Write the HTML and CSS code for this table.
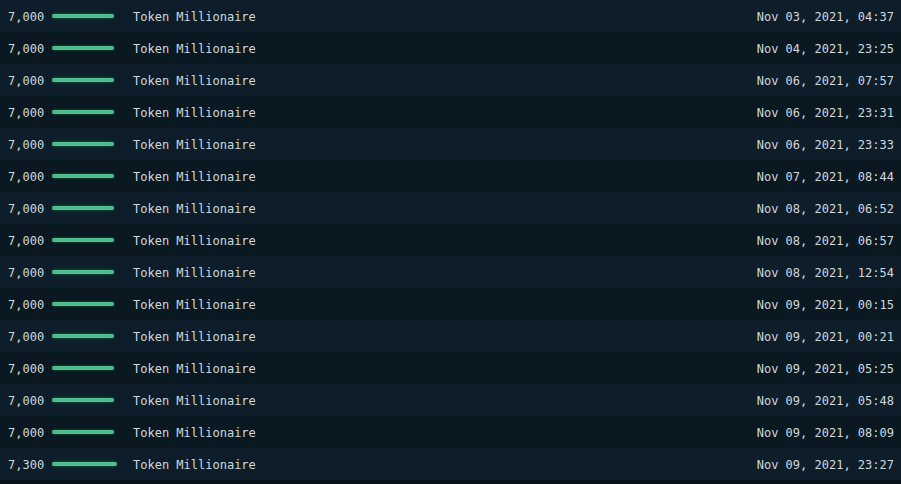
FILE: index.html
```html
<!DOCTYPE html>
<html>
<head>
    <title>Leaderboard</title>
    <meta name="viewport" content="width=device-width, initial-scale=1">
    <link rel="stylesheet" href="styles.css">
</head>
<body>
<div id="list">
    <div class="row"><span class="amount">7,000</span><span class="track"><span class="bar" style="width: 62px"></span></span><span class="title">Token Millionaire</span><span class="date">Nov 03, 2021, 04:37</span></div>
    <div class="row"><span class="amount">7,000</span><span class="track"><span class="bar" style="width: 62px"></span></span><span class="title">Token Millionaire</span><span class="date">Nov 04, 2021, 23:25</span></div>
    <div class="row"><span class="amount">7,000</span><span class="track"><span class="bar" style="width: 62px"></span></span><span class="title">Token Millionaire</span><span class="date">Nov 06, 2021, 07:57</span></div>
    <div class="row"><span class="amount">7,000</span><span class="track"><span class="bar" style="width: 62px"></span></span><span class="title">Token Millionaire</span><span class="date">Nov 06, 2021, 23:31</span></div>
    <div class="row"><span class="amount">7,000</span><span class="track"><span class="bar" style="width: 62px"></span></span><span class="title">Token Millionaire</span><span class="date">Nov 06, 2021, 23:33</span></div>
    <div class="row"><span class="amount">7,000</span><span class="track"><span class="bar" style="width: 62px"></span></span><span class="title">Token Millionaire</span><span class="date">Nov 07, 2021, 08:44</span></div>
    <div class="row"><span class="amount">7,000</span><span class="track"><span class="bar" style="width: 62px"></span></span><span class="title">Token Millionaire</span><span class="date">Nov 08, 2021, 06:52</span></div>
    <div class="row"><span class="amount">7,000</span><span class="track"><span class="bar" style="width: 62px"></span></span><span class="title">Token Millionaire</span><span class="date">Nov 08, 2021, 06:57</span></div>
    <div class="row"><span class="amount">7,000</span><span class="track"><span class="bar" style="width: 62px"></span></span><span class="title">Token Millionaire</span><span class="date">Nov 08, 2021, 12:54</span></div>
    <div class="row"><span class="amount">7,000</span><span class="track"><span class="bar" style="width: 62px"></span></span><span class="title">Token Millionaire</span><span class="date">Nov 09, 2021, 00:15</span></div>
    <div class="row"><span class="amount">7,000</span><span class="track"><span class="bar" style="width: 62px"></span></span><span class="title">Token Millionaire</span><span class="date">Nov 09, 2021, 00:21</span></div>
    <div class="row"><span class="amount">7,000</span><span class="track"><span class="bar" style="width: 62px"></span></span><span class="title">Token Millionaire</span><span class="date">Nov 09, 2021, 05:25</span></div>
    <div class="row"><span class="amount">7,000</span><span class="track"><span class="bar" style="width: 62px"></span></span><span class="title">Token Millionaire</span><span class="date">Nov 09, 2021, 05:48</span></div>
    <div class="row"><span class="amount">7,000</span><span class="track"><span class="bar" style="width: 62px"></span></span><span class="title">Token Millionaire</span><span class="date">Nov 09, 2021, 08:09</span></div>
    <div class="row"><span class="amount">7,300</span><span class="track"><span class="bar" style="width: 65px"></span></span><span class="title">Token Millionaire</span><span class="date">Nov 09, 2021, 23:27</span></div>
</div>
</body>
</html>
```

FILE: styles.css
```css
html, body {
    margin: 0px;
    padding: 0px;
    background-color: #07121a;
}

#list {
    display: flex;
    flex-direction: column;
    font-family: "DejaVu Sans Mono", "Liberation Mono", monospace;
    font-size: 12px;
    color: #d0d8dd;
}

.row {
    height: 32px;
    padding: 0px 7px 0px 8px;
    display: flex;
    align-items: center;
    background-color: #0d1e2a;
}

.row:nth-child(even) {
    background-color: #0a1822;
}

.amount, .title, .date {
    padding-top: 2px;
}

.amount {
    width: 36px;
}

.track {
    width: 73px;
    margin: 0px 8px;
    display: flex;
    align-items: center;
}

.bar {
    height: 4px;
    border-radius: 2px;
    background-color: #4cbf8b;
    box-shadow: 0px 0px 3px rgba(76, 191, 139, 0.45);
}

.title {
    flex: 1;
}

.date {
    text-align: right;
}
```
